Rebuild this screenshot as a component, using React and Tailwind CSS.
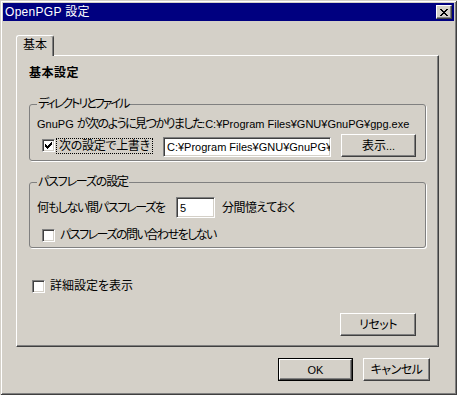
import React from 'react';

const raised =
  'border border-t-white border-l-white border-r-[#404040] border-b-[#404040] shadow-[inset_-1px_-1px_0_#808080] bg-[#d4d0c8]';
const sunken =
  'border border-t-[#808080] border-l-[#808080] border-r-white border-b-white shadow-[inset_1px_1px_0_#404040,inset_-1px_-1px_0_#d4d0c8] bg-white';

const CloseGlyph = () => (
  <svg width="8" height="7" viewBox="0 0 8 7" shapeRendering="crispEdges">
    <path
      d="M0 0h2v1h-2zM6 0h2v1h-2zM1 1h2v1h-2zM5 1h2v1h-2zM2 2h4v1h-4zM3 3h2v1h-2zM2 4h4v1h-4zM1 5h2v1h-2zM5 5h2v1h-2zM0 6h2v1h-2zM6 6h2v1h-2z"
      fill="#000"
    />
  </svg>
);

const CheckGlyph = () => (
  <svg width="7" height="7" viewBox="0 0 7 7" shapeRendering="crispEdges">
    <path
      d="M6 0h1v1h-1zM5 1h2v1h-2zM0 2h1v1h-1zM4 2h3v1h-3zM0 3h2v1h-2zM3 3h3v1h-3zM0 4h5v1h-5zM1 5h3v1h-3zM2 6h1v1h-1z"
      fill="#000"
    />
  </svg>
);

const Checkbox = ({ checked = false, className = '' }) => (
  <div className={`w-[13px] h-[13px] shrink-0 flex items-center justify-center ${sunken} ${className}`}>
    {checked && <CheckGlyph />}
  </div>
);

const Button = ({ children, className = '' }) => (
  <div className={`h-[23px] flex items-center justify-center leading-[14px] ${raised} ${className}`}>
    {children}
  </div>
);

export default function App() {
  return (
    <div className="w-[457px] h-[395px] bg-[#d4d0c8] p-[3px] flex flex-col text-[12px] text-black font-['Liberation_Sans','Noto_Sans_CJK_JP',sans-serif] [font-feature-settings:'palt'] shadow-[inset_1px_1px_0_#d4d0c8,inset_-1px_-1px_0_#404040,inset_2px_2px_0_#ffffff,inset_-2px_-2px_0_#808080]">
      {/* Title bar */}
      <div className="h-[18px] bg-[#000080] flex items-center justify-between pl-[2px] pr-[2px]">
        <span className="text-white leading-[14px] tracking-[0.3px]">OpenPGP 設定</span>
        <div className={`w-[16px] h-[14px] flex items-center justify-center ${raised}`}>
          <CloseGlyph />
        </div>
      </div>

      {/* Tab control */}
      <div className="pl-[13px] pt-[14px]">
        <div className="relative z-10 -mb-px w-[38px] h-[21px] pt-[2px] bg-[#d4d0c8] border-l border-t border-r border-l-white border-t-white border-r-[#404040] rounded-t-[3px] shadow-[inset_-1px_0_0_#808080] text-center leading-[14px]">
          基本
        </div>
        <div className="w-[423px] h-[292px] border border-t-white border-l-white border-r-[#404040] border-b-[#404040] shadow-[inset_-1px_-1px_0_#808080] pl-[12px] pt-[10px] flex flex-col">
          <div className="font-bold leading-[14px] tracking-[0.5px]">基本設定</div>

          {/* Directory and file */}
          <fieldset className="mt-[17px] w-[397px] border border-[#808080] rounded-[3px] px-[7px] pb-[3px] shadow-[1px_1px_0_#ffffff]">
            <legend className="px-[1px] leading-[14px] tracking-[-2px]">ディレクトリとファイル</legend>
            <p className="mt-[6px] leading-[14px] whitespace-nowrap">
              <span className="text-[11px]">GnuPG </span>
              <span className="tracking-[-1.5px]">が次のように見つかりました</span>
              <span className="text-[11px]">:C:¥Program Files¥GNU¥GnuPG¥gpg.exe</span>
            </p>
            <div className="mt-[3px] h-[23px] flex items-center">
              <Checkbox checked className="ml-[5px]" />
              <div className="ml-[1px] w-[97px] h-[16px] border border-dotted border-black px-[2px] leading-[14px] whitespace-nowrap tracking-[-0.3px]">
                次の設定で上書き
              </div>
              <input
                readOnly
                value="C:¥Program Files¥GNU¥GnuPG¥gpg.exe"
                className={`self-end ml-[10px] w-[168px] h-[20px] pl-[3px] text-[11px] leading-[16px] outline-none ${sunken}`}
              />
              <Button className="ml-[10px] w-[75px]">
                表示<span className="text-[11px]">...</span>
              </Button>
            </div>
          </fieldset>

          {/* Passphrase */}
          <fieldset className="mt-[14px] w-[397px] border border-[#808080] rounded-[3px] px-[7px] pb-[5px] shadow-[1px_1px_0_#ffffff]">
            <legend className="px-[1px] leading-[14px] tracking-[-1.2px]">パスフレーズの設定</legend>
            <div className="mt-[8px] flex items-center">
              <span className="w-[139px] leading-[14px] whitespace-nowrap tracking-[-1.3px]">何もしない間パスフレーズを</span>
              <input
                readOnly
                value="5"
                className={`w-[39px] h-[21px] pl-[3px] text-[11px] leading-[17px] outline-none ${sunken}`}
              />
              <span className="ml-[7px] leading-[14px] tracking-[-0.5px]">分間憶えておく</span>
            </div>
            <div className="mt-[10px] h-[14px] flex items-center">
              <Checkbox className="ml-[5px]" />
              <span className="ml-[5px] leading-[14px] whitespace-nowrap tracking-[-1.5px]">パスフレーズの問い合わせをしない</span>
            </div>
          </fieldset>

          <div className="mt-[31px] h-[14px] flex items-center">
            <Checkbox className="ml-[3px]" />
            <span className="ml-[5px] leading-[14px]">詳細設定を表示</span>
          </div>

          <div className="mt-[20px] flex justify-end mr-[22px]">
            <Button className="w-[76px] tracking-[-0.5px]">リセット</Button>
          </div>
        </div>
      </div>

      {/* Dialog buttons */}
      <div className="mt-[11px] flex justify-end gap-[10px] pr-[24px]">
        <div className="w-[75px] h-[23px] border border-black">
          <Button className="w-full h-full text-[11px]">OK</Button>
        </div>
        <Button className="w-[67px] tracking-[-0.5px]">キャンセル</Button>
      </div>
    </div>
  );
}
